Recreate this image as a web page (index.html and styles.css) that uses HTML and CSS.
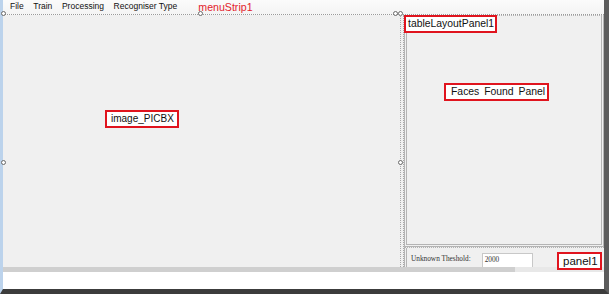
FILE: index.html
```html
<!DOCTYPE html>
<html>
<head>
<meta charset="utf-8">
<link rel="stylesheet" href="styles.css">
</head>
<body>
<div class="frame">
  <div class="menubar">
    <span class="mi">File</span>
    <span class="mi">Train</span>
    <span class="mi">Processing</span>
    <span class="mi">Recogniser Type</span>
    <span class="menu-note">menuStrip1</span>
    <span class="handle h-m1"></span>
    <span class="handle h-m2"></span>
    <span class="handle h-m3"></span>
    <span class="handle h-m4"></span>
  </div>
  <div class="main">
    <div class="picbx">
      <span class="tag tag-pic">image_PICBX</span>
      <span class="handle h-left"></span>
    </div>
    <div class="splitter">
      <span class="handle h-split"></span>
    </div>
    <div class="right">
      <div class="tlp">
        <span class="tag tag-tlp">tableLayoutPanel1</span>
        <span class="tag tag-faces">Faces Found Panel</span>
      </div>
      <div class="panel1">
        <span class="lbl">Unknown Theshold:</span>
        <span class="tb">2000</span>
        <span class="tag tag-panel">panel1</span>
      </div>
    </div>
  </div>
  <div class="hscroll">
    <div class="thumb"></div>
  </div>
  <div class="blank"></div>
</div>
</body>
</html>
```

FILE: styles.css
```css
html, body {
  margin: 0;
  padding: 0;
  background: #ffffff;
}
.frame {
  width: 601px;
  height: 289px;
  border-left: 3px solid #bcd3ec;
  border-right: 5px solid #5c5c5c;
  border-bottom: 5px solid #3c3c3c;
  background: #f0f0f0;
  display: flex;
  flex-direction: column;
  font-family: "Liberation Sans", Arial, sans-serif;
  position: relative;
}
.menubar {
  height: 14px;
  border-bottom: 1px dotted #9a9a9a;
  background: linear-gradient(#fbfbfb, #f4f4f4);
  display: flex;
  align-items: center;
  padding-left: 7px;
  position: relative;
  font-size: 8.5px;
  color: #111111;
}
.mi {
  margin-right: 9.6px;
  line-height: 12px;
  padding-bottom: 2px;
}
.menu-note {
  margin-left: 11.5px;
  color: #e3232b;
  font-size: 10.6px;
  line-height: 12px;
  padding-bottom: 1px;
}
.handle {
  position: absolute;
  width: 3px;
  height: 3px;
  border: 1px solid #6a6a6a;
  border-radius: 50%;
  background: #ffffff;
}
.h-m1 { left: -2px; top: 11px; }
.h-m2 { left: 195px; top: 11px; }
.h-m3 { left: 390px; top: 11px; }
.h-m4 { left: 395px; top: 11px; }
.main {
  height: 252px;
  display: flex;
}
.picbx {
  width: 397px;
  position: relative;
  display: flex;
  align-items: flex-start;
}
.h-left { left: -2px; top: 145px; }
.splitter {
  width: 4px;
  position: relative;
  border-left: 1px dotted #a8a8a8;
  border-right: 1px dotted #a8a8a8;
  box-sizing: border-box;
}
.h-split { left: -3px; top: 145px; }
.right {
  width: 200px;
  display: flex;
  flex-direction: column;
}
.tlp {
  height: 232px;
  box-sizing: border-box;
  border: 3px double #b4b4b4;
  border-top-width: 1px;
  border-top-style: dotted;
  position: relative;
  display: flex;
  align-items: flex-start;
}
.tag {
  border: 2px solid #e0141e;
  background: #ffffff;
  color: #111111;
  font-size: 10.4px;
  line-height: 14px;
  padding: 0 3px;
  white-space: nowrap;
}
.tag-pic {
  margin-left: 102px;
  margin-top: 95px;
  font-size: 10px;
  padding: 0 3px 0 4px;
}
.tag-tlp {
  position: absolute;
  left: -3px;
  top: -1px;
  padding: 0 1px 0 2px;
}
.tag-faces {
  margin-left: 37px;
  margin-top: 67px;
  word-spacing: 2px;
  padding: 0 2px 0 5px;
}
.panel1 {
  height: 20px;
  box-sizing: border-box;
  border-left: 3px double #b4b4b4;
  border-top: 1px dotted #b4b4b4;
  position: relative;
  display: flex;
  align-items: flex-end;
  padding-left: 4px;
  font-family: "Liberation Serif", "Times New Roman", serif;
  font-size: 7.3px;
  color: #333333;
}
.lbl {
  line-height: 14px;
  margin-bottom: 1px;
}
.tb {
  margin-left: 11px;
  height: 14px;
  background: #ffffff;
  border: 1px solid #c8c8c8;
  border-bottom: none;
  line-height: 12px;
  padding-left: 2px;
  box-sizing: border-box;
  width: 51px;
}
.tag-panel {
  position: absolute;
  left: 150px;
  top: 4px;
  font-family: "Liberation Sans", Arial, sans-serif;
  font-size: 11.5px;
  padding: 0 2px 0 4px;
}
.hscroll {
  height: 5px;
  background: #e8e8e8;
  display: flex;
}
.thumb {
  width: 512px;
  background: #cfcfcf;
}
.blank {
  height: 17px;
  background: #ffffff;
}
```
